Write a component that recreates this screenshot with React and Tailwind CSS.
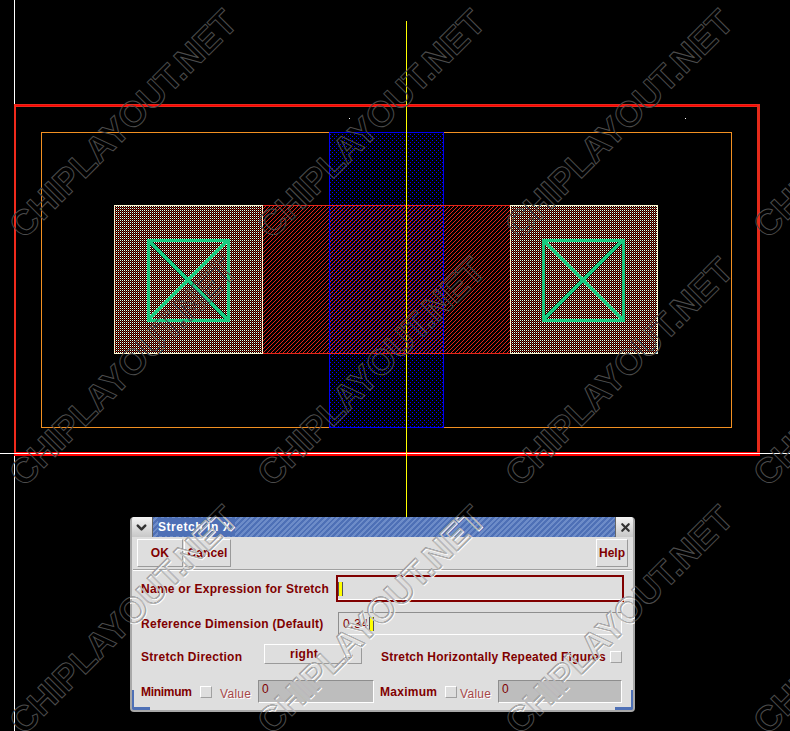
import { ChevronDown, X } from 'lucide-react'

const label = "font-['Liberation_Sans',sans-serif] font-bold text-[12px] tracking-[0.27px] text-[#800000] whitespace-nowrap"
const raised = 'border border-t-white border-l-white border-r-[#9a9a9a] border-b-[#9a9a9a] bg-[#dedede]'
const sunken = 'border border-t-[#8e8e8e] border-l-[#8e8e8e] border-r-white border-b-white'

const marks = []
for (const y of [240, 488, 736]) for (const x of [24, 272, 520, 768]) marks.push([x, y])

function Watermarks({ stroke, dx = 0, dy = 0, clip }) {
  return (
    <g clipPath={clip}>
      {marks.map(([x, y]) => (
        <text
          key={x + '-' + y}
          transform={`translate(${x + dx} ${y + dy}) rotate(-45)`}
          fontFamily="Liberation Sans, sans-serif"
          fontWeight="700"
          fontSize="35.5"
          fill="none"
          stroke={stroke}
          strokeWidth="1"
        >
          CHIPLAYOUT.NET
        </text>
      ))}
    </g>
  )
}

function Contact({ x }) {
  return (
    <g fill="none" stroke="#18cc80" strokeWidth="3">
      <rect x={x} y="240" width="80" height="80" />
      <path d={`M${x} 240 L${x + 80} 320 M${x + 80} 240 L${x} 320`} />
    </g>
  )
}

function Layout() {
  return (
    <svg width="790" height="731" className="block" shapeRendering="crispEdges">
      <defs>
        <pattern id="diff" width="2" height="2" patternUnits="userSpaceOnUse">
          <rect width="2" height="2" fill="#000" />
          <rect x="0" y="0" width="1" height="1" fill="#fffbe0" />
          <rect x="1" y="1" width="1" height="1" fill="#b01808" />
        </pattern>
        <pattern id="hatch" width="4" height="4" patternUnits="userSpaceOnUse">
          <path d="M0 3h1v1h-1zM1 2h1v1h-1zM2 1h1v1h-1zM3 0h1v1h-1z" fill="#e4261a" />
        </pattern>
        <pattern id="poly" width="4" height="4" patternUnits="userSpaceOnUse">
          <rect x="0" y="0" width="1" height="1" fill="#0000ff" />
          <rect x="2" y="2" width="1" height="1" fill="#0000ff" />
        </pattern>
      </defs>
      {/* layer drawing */}
      <rect x="41.5" y="132.5" width="690" height="295" fill="none" stroke="#f29022" />
      <rect x="329.5" y="132.5" width="114" height="295" fill="url(#poly)" stroke="#0000f0" />
      <rect x="262.5" y="205.5" width="248" height="148" fill="url(#hatch)" stroke="#e4261a" />
      <rect x="329" y="206" width="1" height="147" fill="#0000f0" />
      <rect x="443" y="206" width="1" height="147" fill="#0000f0" />
      <rect x="114.5" y="205.5" width="148" height="148" fill="url(#diff)" stroke="#fff6cf" />
      <rect x="510.5" y="205.5" width="147" height="148" fill="url(#diff)" stroke="#fff6cf" />
      <Contact x={148} />
      <Contact x={543} />
      {/* cell boundary and axes */}
      <rect x="14" y="0" width="1" height="731" fill="#ffffff" />
      <rect x="0" y="453" width="790" height="1" fill="#ffffff" />
      <rect x="14" y="104" width="746" height="3" fill="#e62a1c" />
      <rect x="14" y="105" width="746" height="1" fill="#ff0000" />
      <rect x="14" y="104" width="2" height="351" fill="#f02a1c" />
      <rect x="757" y="104" width="3" height="351" fill="#e42a1a" />
      <rect x="14" y="452" width="746" height="1" fill="#ff0000" />
      <rect x="14" y="453" width="746" height="1" fill="#ffffff" />
      <rect x="14" y="454" width="746" height="2" fill="#ff0000" />
      <rect x="406" y="21" width="1" height="496" fill="#ffff00" />
      <rect x="349" y="118" width="1" height="1" fill="#ffffff" />
      <rect x="685" y="118" width="1" height="1" fill="#ffffff" />
    </svg>
  )
}

function Cursor() {
  return <span className="inline-block w-[5px] h-[14px] bg-[#ffff00] border-x border-[#555]" />
}

function Check() {
  return <span className="block w-[12px] h-[12px] shrink-0 border border-t-white border-l-white border-r-[#a0a0a0] border-b-[#a0a0a0]" />
}

function DisabledValue() {
  return (
    <span className="font-['Liberation_Sans',sans-serif] text-[12px] tracking-[0.3px] text-[#a84848] [text-shadow:1px_1px_0_#ffffff]">
      Value
    </span>
  )
}

function ValueField({ width }) {
  return (
    <div className={`${width} h-[23px] bg-[#bdbdbd] ${sunken} px-[3px] font-['Liberation_Sans',sans-serif] text-[12px] leading-[16px] text-[#800000]`}>
      0
    </div>
  )
}

function Dialog() {
  return (
    <div className="absolute left-[130px] top-[517px] w-[505px] h-[195px] flex flex-col rounded-[4px] overflow-hidden bg-[#dedede] border-x-2 border-b-2 border-[#a8a8a8]">
      {/* title bar */}
      <div className="flex h-[20px] shrink-0 -mx-[2px]">
        <div className="w-[23px] flex items-center justify-center bg-gradient-to-b from-[#f4f4f4] to-[#c8c8c8] border-r border-[#666]">
          <ChevronDown size={15} strokeWidth={4} className="text-[#333]" />
        </div>
        <div className="flex-1 flex items-center pl-[5px] bg-[repeating-linear-gradient(135deg,#4e70b6_0px,#4e70b6_2px,#6d8cc8_2px,#6d8cc8_4px)]">
          <span className="bg-[#4e70b6] pr-[4px] font-['Liberation_Sans',sans-serif] font-bold text-[12px] tracking-[0.55px] text-white">Stretch in X</span>
        </div>
        <div className="w-[20px] flex items-center justify-center bg-gradient-to-b from-[#f4f4f4] to-[#c8c8c8] border-l border-[#666]">
          <X size={13} strokeWidth={4} className="text-[#333]" />
        </div>
      </div>

      {/* buttons */}
      <div className="flex justify-between pl-[4px] pr-[4px] pt-[2px] pb-[2px] border-b border-[#a0a0a0] shadow-[0_1px_0_#ffffff] mx-[1px]">
        <div className="flex gap-[1px]">
          <button className={`${raised} ${label} w-[46px] h-[28px]`}>OK</button>
          <button className={`${raised} ${label} w-[47px] h-[28px] !tracking-[0.1px]`}>Cancel</button>
        </div>
        <button className={`${raised} ${label} w-[32px] h-[28px] !tracking-[0px]`}>Help</button>
      </div>

      {/* form rows */}
      <div className="flex-1 flex flex-col pl-[9px] pr-[11px]">
        <div className="flex items-center justify-between mt-[5px] h-[27px]">
          <span className={label}>Name or Expression for Stretch</span>
          <div className="w-[288px] h-[27px] -mr-[2px] border-2 border-[#800000] shadow-[inset_0_-1px_0_#ffffff] flex items-center">
            <Cursor />
          </div>
        </div>
        <div className="flex items-center justify-between mt-[10px] h-[23px]">
          <span className={label}>Reference Dimension (Default)</span>
          <div className={`w-[284px] h-[23px] ${sunken} pl-[4px] flex items-center font-['Liberation_Sans',sans-serif] text-[12px] tracking-[0.6px] text-[#800000]`}>
            0.34<Cursor />
          </div>
        </div>
        <div className="flex items-center mt-[9px] h-[20px]">
          <span className={`${label} w-[123px] mt-[6px]`}>Stretch Direction</span>
          <div className={`${raised} w-[98px] h-[20px] flex items-center justify-center relative pr-[18px] ${label}`}>
            right
            <span className="absolute right-[8px] top-[9px] w-[9px] h-[4px] bg-[#dedede] border border-t-white border-l-white border-r-[#999] border-b-[#999]" />
          </div>
          <span className={`${label} ml-[19px] mt-[6px] !tracking-[0.2px]`}>Stretch Horizontally Repeated Figures</span>
          <span className="ml-auto mt-[6px]"><Check /></span>
        </div>
        <div className="flex items-center mt-[16px] h-[23px]">
          <span className={`${label} w-[59px] !tracking-[-0.3px]`}>Minimum</span>
          <Check />
          <span className="ml-[8px] w-[38px]"><DisabledValue /></span>
          <ValueField width="w-[116px]" />
          <span className={`${label} ml-[6px] w-[65px]`}>Maximum</span>
          <Check />
          <span className="ml-[3px] w-[38px]"><DisabledValue /></span>
          <ValueField width="w-[124px]" />
        </div>
      </div>

      {/* blue resize corners */}
      <span className="absolute left-[-2px] bottom-[-2px] w-[20px] h-[5px] bg-[#4e70b6]" />
      <span className="absolute left-[-2px] bottom-[-2px] w-[4px] h-[22px] bg-[#4e70b6]" />
      <span className="absolute right-[-2px] bottom-[-2px] w-[20px] h-[5px] bg-[#4e70b6]" />
      <span className="absolute right-[-2px] bottom-[-2px] w-[4px] h-[22px] bg-[#4e70b6]" />
    </div>
  )
}

export default function App() {
  return (
    <div className="relative w-[790px] h-[731px] overflow-hidden bg-black">
      <Layout />
      <Dialog />
      {/* site watermark sits over everything */}
      <svg width="790" height="731" className="absolute left-0 top-0 pointer-events-none">
        <defs>
          <clipPath id="dlg">
            <rect x="130" y="517" width="505" height="195" />
          </clipPath>
        </defs>
        <Watermarks stroke="#4c4c4c" />
        <Watermarks stroke="#ffffff" dx={1} dy={1} clip="url(#dlg)" />
        <Watermarks stroke="#b4b4b4" clip="url(#dlg)" />
      </svg>
    </div>
  )
}
